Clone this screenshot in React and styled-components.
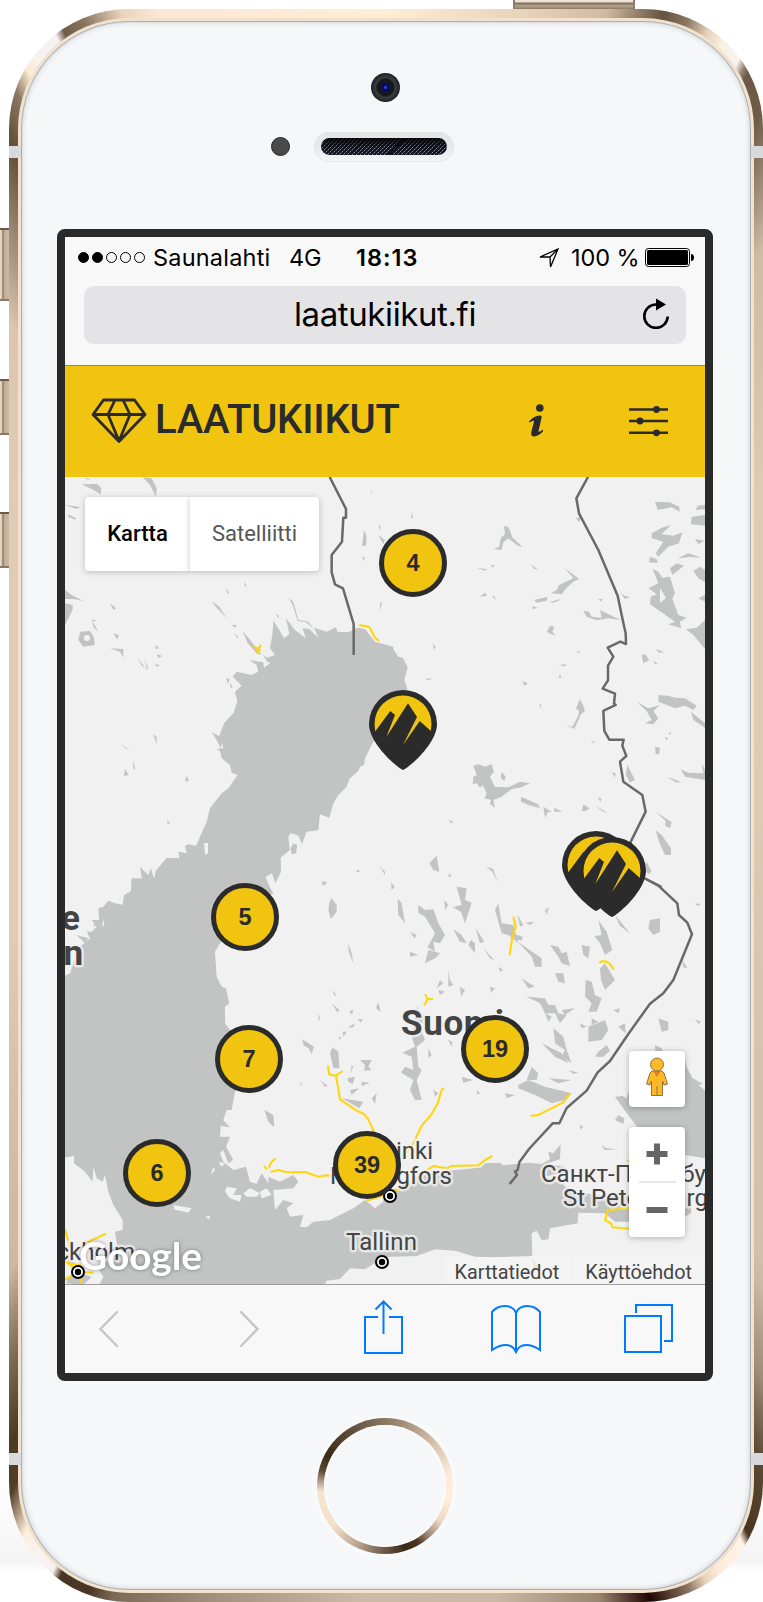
import React from "react";
import styled, { createGlobalStyle } from "styled-components";

const Global = createGlobalStyle`
  * { box-sizing: border-box; }
  html, body { margin: 0; padding: 0; background: #fff; }
  body { width: 763px; height: 1602px; overflow: hidden; }
`;

const ink = "#2b2b2b";
const yellow = "#f1c40f";
const blue = "#007aff";
const ui = `Inter, "Liberation Sans", sans-serif`;
const roboto = `Roboto, "Liberation Sans", sans-serif`;

/* ---------- device ---------- */
const Stage = styled.main`
  display: grid;
  grid-template: 9px 1593px / 9px 754px;
  width: 763px;
  height: 1602px;
  background: linear-gradient(#fff 1470px, #f5f5f5 1562px, #fff 1572px);
`;
const PowerRail = styled.div`
  grid-column: 1 / 3;
  padding-left: 513px;
`;
const PowerButton = styled.div`
  width: 122px;
  height: 9px;
  border: 1px solid #8d7c69;
  border-bottom: 0;
  border-width: 0 2px;
  background: linear-gradient(#eee5da 0 2px, #7a6855 3px, #b7a58f 6px, #8b7966 9px);
`;
const SideRail = styled.div`
  display: flex;
  flex-direction: column;
  padding-top: 219px;
`;
const SideButton = styled.div`
  height: ${(p) => p.$h}px;
  margin-bottom: ${(p) => p.$gap}px;
  border-top: 2px solid #6d5a46;
  border-bottom: 2px solid #8b7762;
  background: linear-gradient(90deg, #eadbc8 0 1px, #cdb9a3 2px, #7c6955 3px, #bfac97 4px, #cbb9a5 9px);
`;
const Shell = styled.div`
  position: relative;
  height: 1593px;
  padding: 9px;
  border-radius: 120px;
  background: conic-gradient(
    #ffedd4 0deg, #e8d2ba 10deg, #d0bba2 15.5deg, #65523e 19.3deg, #8a7762 21deg, #e6d2bd 22.6deg,
    #faf0e0 23.8deg, #f8f2f2 25.3deg, #8e8070 25.9deg, #6b5a45 26.3deg, #705c46 28.4deg, #8a7762 30deg,
    #d0bba5 34deg, #e0cbb5 50deg, #dfcab4 90deg, #d3bfaa 140deg, #cdb8a4 142deg, #9e8c78 146.7deg,
    #5d4a35 150.1deg, #4a3520 153.6deg, #fff3e5 154.2deg, #fdecdb 156.5deg, #e9d2bc 157.6deg,
    #8b7562 158.9deg, #1f0500 161.6deg, #9b8672 165deg, #cbb7a3 172deg, #cdb9a5 182deg, #a08c78 193deg,
    #7c6a57 199deg, #4a3624 200.7deg, #4a3624 202.9deg, #f6f1ef 203.5deg, #f8f4f2 205deg, #fdeedc 206.4deg,
    #b39c86 207.4deg, #523f2a 208.6deg, #4a3a25 210.5deg, #7d6b57 214deg, #cdb8a4 219deg,
    #e0cbb5 250deg, #e0ccb5 310deg, #dcc6af 322deg,
    #9a8771 327deg, #604e39 330.5deg, #8a7762 332.6deg, #fbead2 334deg, #f8f2f2 335deg,
    #f6f0f0 336.8deg, #6f5d49 337.4deg, #8a7762 339deg, #e8d2bd 341.5deg, #fde8d6 344deg, #ffedd4 360deg
  );
`;
const Antenna = styled.i`
  position: absolute;
  ${(p) => p.$side}: 0;
  top: ${(p) => p.$y}px;
  width: 12px;
  height: 12px;
  background: #d8d9dd;
`;
const Bevel = styled.div`
  height: 1575px;
  padding: 3px;
  border-radius: 111px;
  background: #f2e2cc;
`;
const Face = styled.div`
  display: flex;
  flex-direction: column;
  height: 1569px;
  padding-left: 36px;
  border-radius: 108px;
  background: #f5f7f9;
  box-shadow: inset 0 0 1px 1px #a9abad, inset 0 0 4px 3px #dfe2e5;
`;
const Sensors = styled.div`
  height: 208px;
  padding: 52px 0 0 0;
`;
const Camera = styled.div`
  width: 29px;
  height: 29px;
  margin-left: 314px;
  border-radius: 50%;
  background: radial-gradient(circle, #3443c8 0 1px, #080a72 2px 4px, #15191c 5px 8px, #3a3e3f 10px, #202323 14px);
`;
const SpeakerRow = styled.div`
  display: flex;
  align-items: center;
  gap: 24px;
  margin: 30px 0 0 214px;
`;
const Proximity = styled.div`
  width: 19px;
  height: 19px;
  margin-bottom: 1px;
  border-radius: 50%;
  border: 1px solid #222;
  background: #4a4a4a;
`;
const Speaker = styled.div`
  width: 140px;
  height: 30px;
  padding: 6px 7px;
  border-radius: 15px;
  background: linear-gradient(#e3e5e7, #e8eaec 55%, #f5f5f8);
  box-shadow: inset 0 0 0 1px #e4e6e8;
`;
const Mesh = styled.div`
  height: 17px;
  border-radius: 9px;
  background: linear-gradient(rgba(0,0,0,.85), transparent 60%),
    repeating-linear-gradient(90deg, rgba(20,18,32,.55) 0 1px, transparent 1px 2px),
    repeating-linear-gradient(135deg, #11111a 0 1.4px, #8c8a9c 1.4px 2.1px, #1b1927 2.1px 2.9px);
`;
const Home = styled.div`
  width: 136px;
  height: 136px;
  margin: 37px 0 0 260px;
  padding: 7px;
  border-radius: 50%;
  background: conic-gradient(#8a7762, #b09c86 25deg, #d8c4ae 50deg, #fdebda 80deg, #ffeedd 100deg, #eed9c4 122deg,
    #a08c78 138deg, #4a3622 150deg, #3c2a18 162deg, #6a5845 180deg, #b8a48f 205deg, #f3e0cc 232deg,
    #f7e4d0 265deg, #c4b09b 272deg, #5a4734 284deg, #3c2a18 298deg, #5d4b38 325deg, #8a7762);
  box-shadow: 0 0 5px 2px #fbfcfd;
`;
const HomeInner = styled.div`
  height: 122px;
  border-radius: 50%;
  background: #f5f7f9;
  box-shadow: inset 0 0 3px 1px #fff;
`;

/* ---------- browser ---------- */
const Screen = styled.div`
  width: 656px;
  height: 1152px;
  border: 8px solid #2a2a2a;
  border-radius: 8px;
  background: #f8f8f8;
`;
const Chrome = styled.header`
  height: 129px;
  border-bottom: 1px solid #a88a14;
`;
const Status = styled.div`
  display: flex;
  align-items: center;
  height: 49px;
  padding: 0 11px 8px 13px;
  font: 400 23.5px/30px ${ui};
  color: #000;
  white-space: nowrap;
`;
const Signal = styled.div`
  display: flex;
  gap: 3px;
  width: 68px;
  margin-right: 7px;
`;
const Dot = styled.i`
  width: 11px;
  height: 11px;
  border-radius: 50%;
  border: 1px solid #000;
  background: ${(p) => (p.$on ? "#000" : "none")};
`;
const Carrier = styled.span`
  width: 136px;
  letter-spacing: 0.2px;
`;
const Network = styled.span`
  width: 67px;
  letter-spacing: -0.3px;
`;
const Clock = styled.b`
  width: 183px;
  font-weight: 600;
  letter-spacing: 1px;
`;
const Percent = styled.span`
  flex: 1;
  padding-left: 12px;
  letter-spacing: -0.1px;
`;
const Address = styled.div`
  display: flex;
  align-items: center;
  justify-content: space-between;
  width: 602px;
  height: 58px;
  margin-left: 19px;
  padding: 0 17px 4px 42px;
  border-radius: 10px;
  background: #e4e4e6;
  font: 400 33px/40px ${ui};
  letter-spacing: -0.4px;
`;
const Host = styled.span`
  flex: 1;
  padding: 1px 0 0 1px;
  text-align: center;
`;

/* ---------- site ---------- */
const AppBar = styled.nav`
  display: flex;
  align-items: center;
  height: 111px;
  padding: 0 37px 2px 26px;
  background: ${yellow};
  color: ${ink};
`;
const Title = styled.h1`
  flex: 1;
  margin: 0 0 1px 8px;
  font: 500 40px/46px ${roboto};
  letter-spacing: -0.2px;
`;
const MapArea = styled.section`
  position: relative;
  height: 808px;
  overflow: hidden;
  border-bottom: 1px solid #a0a0a0;
  background: #f1f1f1;
`;
const MapSvg = styled.svg`
  display: block;
`;
const MapType = styled.div`
  position: absolute;
  left: 20px;
  top: 20px;
  display: flex;
`;
const TypeButton = styled.button`
  width: ${(p) => p.$w}px;
  height: 74px;
  padding: 0 0 1px;
  border: 0;
  border-radius: ${(p) => (p.$on ? "4px 0 0 4px" : "0 4px 4px 0")};
  background: #fff;
  box-shadow: 0 1px 6px rgba(0,0,0,.22);
  font: ${(p) => (p.$on ? 500 : 400)} 22px ${roboto};
  color: ${(p) => (p.$on ? "#000" : "#565656")};
`;
const Cluster = styled.div`
  position: absolute;
  left: ${(p) => p.$x - 99}px;
  top: ${(p) => p.$y - 511}px;
  width: 68px;
  height: 68px;
  padding-top: 1px;
  border: 5.5px solid ${ink};
  border-radius: 50%;
  background: ${yellow};
  color: ${ink};
  font: 700 23.5px/57px "Liberation Sans", Arial, sans-serif;
  text-align: center;
`;
const PinBox = styled.svg`
  position: absolute;
  left: ${(p) => p.$x - 99}px;
  top: ${(p) => p.$y - 477}px;
`;
const Controls = styled.div`
  position: absolute;
  right: 20px;
  top: 574px;
  display: grid;
  gap: 20px;
`;
const Panel = styled.div`
  display: flex;
  flex-direction: column;
  align-items: center;
  width: 56px;
  height: ${(p) => p.$h}px;
  border-radius: 4px;
  background: #fff;
  box-shadow: 0 1px 6px rgba(0,0,0,.28);
`;
const PegmanIcon = styled.svg`
  margin-top: 6px;
`;
const SlidersIcon = styled.svg`
  margin-left: 85px;
`;
const Zoom = styled.div`
  display: grid;
  place-items: center;
  height: 54px;
`;
const Rule = styled.i`
  width: 37px;
  height: 2px;
  background: #e6e6e6;
`;
const Credits = styled.div`
  position: absolute;
  right: 0;
  bottom: 0;
  display: flex;
  gap: 2px;
  height: 27px;
  font: 400 19.8px/31px ${roboto};
  color: #444;
`;
const Credit = styled.span`
  padding: 0 ${(p) => p.$r}px 0 11px;
  background: rgba(245,245,245,.72);
`;
const Toolbar = styled.footer`
  display: grid;
  grid-template-columns: 87px 194px 74px 192px 73px;
  justify-items: center;
  align-items: center;
  height: 88px;
`;
const ToolIcon = styled.svg`
  display: block;
  margin-bottom: ${(p) => p.$lift || 0}px;
  fill: none;
  stroke: ${(p) => (p.$muted ? "#c5c5c7" : blue)};
  stroke-width: ${(p) => (p.$muted ? 2.4 : 2)};
  stroke-linecap: ${(p) => (p.$muted ? "round" : "butt")};
`;

/* ---------- map drawing ---------- */
const sea = "#c2c4c3";
const poly = (list) => list.split("|").map((p) => "M" + p.trim() + "Z").join("");

const NW = poly(`640 437 655 460 672 490 688 478 678 430 705 465 737 490 728 460 748 462 775 488 762 458 800 470 828 457 832 470 865 472 893 458 915 462 945 500 1000 515 1000 760 940 800 915 850 912 870 900 875 895 888 868 912 860 935 835 960 820 985 808 1028 780 1018 775 1066 740 1070 726 1107 715 1082 692 1074 685 1085 690 1125 662 1148 663 1190 646 1224 636 1195 617 1205 630 1240 215 1240 215 1213 247 1217 240 1175 265 1200 272 1180 283 1212 287 1188 320 1148 358 1150 355 1130 380 1135 375 1113 385 1108 408 1113 420 1085 440 1040 450 1000 485 955 505 940 533 900 515 893 510 870 485 850 480 828 470 822 490 820 485 797 475 790 492 745 520 715 532 680 525 650 545 632 518 605 530 590 575 600 595 590 590 570 568 555 610 562 612 578 630 565 622 548 645 540 630 520 637 480
|65 28 112 27 124 40 122 58 95 42|15 90 60 96 50 102|25 118 48 130 46 134 25 126|248 6 275 10 290 40 288 65 270 30|80 8 95 16 78 12|15 345 35 360 70 378 40 372 15 372|15 385 38 390 38 405 15 450|60 470 90 468 102 488 104 510 70 515 55 495|96 433 110 437 98 440 116 472 100 455|150 385 168 400 160 404|200 418 220 432|160 475 176 480 172 494|150 520 190 522 190 548 180 530|147 557 172 560|231 548 262 585 252 550 266 582 245 572|288 510 298 520 286 522|290 538 308 543 295 548|286 567 300 571 290 576|498 342 507 352 502 358|555 320 560 335 553 332|455 378 478 395 500 430 470 398|515 450 530 450 525 458|548 468 575 500 605 540 590 535 563 505|610 540 635 558 622 562|685 368 700 380 715 434 745 440 760 460 738 442 713 437 698 390|648 418 656 420 655 430|525 475 538 492 528 485|498 610 508 612 505 628|510 625 518 635 512 640|455 772 490 790 482 820 470 795|183 806 208 826 195 820|218 855 226 880 221 885|195 882 206 900 192 903|380 902 387 918 375 918|225 918 258 944|322 1035 330 1045 322 1047|203 738 220 742|228 748 242 758|280 778 290 785 290 808|152 745 160 755|700 1105 712 1110 708 1135 695 1138 692 1120|895 1183 900 1192 888 1190|787 1220 800 1220 797 1230|905 242 915 250 912 258|912 165 920 185 918 212 906 213|935 45 937 52 932 52|955 150 962 155 960 168|955 180 975 195 970 208|960 385 966 382 960 410|958 1172 975 1190 975 1200`);

const NE = poly(`-30 505 0 509 22 518 40 545 53 548 68 577 58 615 68 645 60 700 -30 780
|357 153 370 155 383 188 412 215 398 212 370 190 355 202 350 225 325 222 343 215 347 190 360 178|275 278 307 283 300 287|318 270 330 271 322 278|436 268 460 284 448 282|538 278 582 312 565 320 545 338 530 358 498 355 515 345 522 330 565 310|285 365 300 353 306 362|320 362 330 365 332 375|447 375 470 370 488 365 485 377 455 383|497 380 525 372 520 378 500 384|443 393 458 398 442 403|486 470 495 452 508 456 502 470 512 482 492 475|595 408 612 410 620 425 650 428 645 405 708 436 670 430 635 436 605 425|640 372 653 372 648 380|705 352 718 362 735 366 720 372|143 505 152 515 147 525|177 558 203 557|120 612 144 610 130 616|190 619 215 616|412 618 428 625 418 632|463 687 470 690 466 700|520 570 545 568 540 574|525 597 530 608 520 608|585 672 593 688 600 708 588 718 568 762 543 750 562 755 580 722 582 708 573 700|265 872 280 868 300 875 320 868 327 890 315 905 330 935 370 937 405 920 435 925 405 938 380 942 350 965 325 975 330 998 315 988 318 975 298 970 305 955 293 930 285 938 275 925 263 928 265 905 275 900|350 890 362 905 358 918 347 908|408 965 460 988 465 1000 430 990 408 980|475 995 500 1010 488 1012 480 1028|508 998 533 1010 508 1010|595 988 614 1000 603 1008 590 1008|632 992 668 1015 650 1008|145 935 160 955|190 1032 204 1040 200 1046|155 1142 163 1190 145 1185 133 1165|303 1174 325 1183 338 1222 322 1190|192 1195 200 1205 190 1205|727 870 750 915 735 922 722 900|680 890 692 895 690 908|810 80 855 82 882 95 885 110 860 97 818 105|938 92 960 90 960 103 932 105|920 125 960 120 960 152 918 148|800 175 830 158 858 150 830 178 865 182 892 172 882 205 850 215 820 245 812 235 825 215 835 200 800 190|795 245 815 252 818 264 792 262|878 250 910 235 950 248 915 246|930 192 958 197 940 207|862 300 855 280 875 265 897 272|803 282 820 290 832 308 855 305 870 355 862 370 880 420 905 428 885 440 888 460 850 448 870 440 795 388 797 365 815 358 790 340 820 325|925 288 945 275 960 285 960 322 940 310|903 463 935 458 960 435 960 522 925 480|940 370 960 360 960 380|770 540 780 538 793 555 775 565|812 522 838 532 822 533|805 557 820 567 810 568|820 660 850 662 870 668 900 670 935 692 925 705 900 692 870 700 820 680|755 680 790 700 825 690 805 708 820 730 805 748 780 745 800 735 785 708|918 710 960 745 960 758 925 735|810 815 825 818 822 838 812 838|840 785 850 790 843 796|853 772 860 774 850 780|887 883 910 893 955 895 950 865 960 885 960 915 900 905|845 905 887 920 875 923|800 892 828 910|812 1010 860 1042 855 1060 840 1052 842 1038|812 1065 830 1080 858 1120 858 1140 840 1140 822 1100|785 1160 800 1190 790 1198 778 1180|865 1183 872 1200|573 130 590 125 582 142|80 112 84 130 78 128|42 50 68 68|373 48 363 78|575 528 586 528 580 535|410 1160 425 1176|618 800 632 798 622 805|638 965 650 972 646 980`);

const SW = poly(`215 -5 213 33 192 45 188 74 165 70 145 62 130 80 115 85 118 120 95 120 110 140 95 155 80 155 90 175 60 200 45 235 30 280 15 287 0 290 0 835 42 828 42 850 75 875 98 905 100 860 110 895 128 905 135 885 145 935 160 975 188 1020 188 1050 165 1055 172 1100 130 1110 150 1140 110 1160 130 1190 115 1220 790 1220 800 1202 840 1197 870 1165 915 1168 960 1140 990 1130 990 950 945 985 915 960 880 985 840 1005 810 1020 760 1025 740 1042 720 1040 730 1005 690 1010 680 985 700 970 670 960 645 990 640 930 700 925 715 905 700 885 660 905 625 890 625 910 605 880 590 910 570 905 558 860 520 870 490 845 480 820 490 810 505 850 520 840 498 800 510 770 480 770 482 738 510 742 490 720 500 690 515 690 525 635 560 550 510 450 495 430 495 380 508 370 498 325 485 320 470 290 465 215 480 190 530 100 640 40 615 -5`);
const SWland = poly(`500 920 530 925 520 945 545 945 540 965 510 955 495 935|550 940 570 925 600 940 590 950 560 950|600 935 620 925 635 945 605 955|325 985 345 990 340 975 395 985 385 998 360 992|435 1010 450 1008 448 1018|460 860 465 870 452 885|130 115 133 135 127 140|565 860 585 880 592 912 570 905|630 1012 645 1018|475 845 495 850 485 860`);
const SWlake = poly(`815 55 830 75 830 95 812 117 805 90 808 68|785 5 800 8 788 18|840 125 848 132|865 190 875 220 880 250 866 215|785 185 790 190|818 330 830 348 822 345|815 370 838 390 832 397|853 385 862 390|868 395 880 388 876 405|955 367 962 395 948 385|893 418 908 418 902 428|862 443 885 430 880 442|848 455 860 455 850 470|836 470 845 472 838 480|775 400 780 415 776 425|727 478 762 500 755 522 745 505 730 495|818 502 835 515 838 565 820 565 810 520|900 540 935 540 925 560 935 570 912 572 915 555|862 595 885 590 878 612 865 605|905 605 930 608 905 618|870 630 898 625 875 645|875 555 880 560 872 580|780 600 803 618 795 620|845 655 910 665 898 685|935 655 950 640 945 672|613 690 640 705 643 742 625 725|615 625 635 640|720 612 725 606 724 618|20 1195 60 1180 95 1190 70 1215 20 1210|15 1120 45 1150 30 1160|105 120 120 125 100 142|85 175 50 165 75 190|50 70 58 78`);

const SE = poly(`-5 932 40 925 90 890 150 875 240 868 290 862 300 850 345 848 355 856 430 848 470 852 495 838 490 815 505 820 527 793 525 838 490 850 540 862 560 875 475 890 530 910 560 935 640 945 735 950 920 955 918 1000 890 1015 800 1005 735 1025 690 1025 660 1000 580 998 578 1030 495 1045 490 1078 470 1080 455 1052 440 1060 442 1128 330 1132 270 1130 210 1112 150 1108 95 1128 20 1130 -5 1130
|690 650 712 648 725 655 730 635 800 600 895 515 905 560 925 600 955 628 960 630 960 835 900 825 760 745 722 695|915 590 955 612 940 615|810 495 830 505 835 520 812 520
|38 55 50 70 60 130 40 105|18 8 30 20 20 30|100 75 120 90 145 88 160 130 180 165 165 190 145 185 150 215 128 202 150 160 120 110 100 98|215 20 245 25 240 60 260 68 240 130 228 95 203 82 230 75|205 148 230 165 245 190 225 185|272 145 298 185 285 190|258 180 270 190 270 220 250 195|330 5 340 70 350 130 385 135 400 190 370 165 350 160 330 90 340 70|295 205 328 240 315 235|398 105 415 135 405 140|420 128 448 125 435 135|448 10 458 30|480 90 492 82 485 105|380 160 413 170 410 182 385 175|398 185 470 235 470 260 450 260 440 230|495 195 520 200 530 220 545 215 555 258 530 250 520 230|590 195 615 200 610 235 595 225|600 188 610 200|640 120 665 155 682 210 660 225 645 190 628 168 650 165|690 105 735 160 705 138|795 120 825 115 825 155 805 165 790 145|645 265 660 250 690 300 660 330 648 300|602 300 620 305 630 345 650 355 635 395 610 395 620 370 600 350|510 280 535 280 540 310 520 305|410 295 450 320 430 325|425 350 480 355 490 375 510 375 520 400 545 405 525 430 510 400 480 400 465 370|530 390 570 385 540 405|610 440 660 420 670 450 650 480 610 485|620 415 640 425 620 435|505 445 535 470 545 510 560 550 530 530 540 510 510 490|470 490 530 520 550 550 510 530|640 515 665 495 675 512 655 530 630 530|685 390 705 385 700 400|700 440 720 430 722 460|820 415 850 425 850 450 830 455|830 400 840 410|892 240 908 265 895 262|850 220 865 232|930 70 948 72 938 78|930 418 948 425 940 432|95 380 120 410 140 365 125 400 105 440 120 480 95 500 100 560 110 570 95 600 110 660 90 660 75 630 85 600 48 578 60 560 85 570 80 530 52 518 90 500 80 470|130 505 140 525 130 535|190 480 202 485 200 500|160 540 170 550|230 590 265 600 235 608|360 640 390 645 365 655|275 630 285 640 278 645|190 270 195 300 205 315 190 320|165 300 175 310 155 325|160 330 180 335 165 345|225 320 240 330 228 350|315 320 330 325 318 338|340 260 355 270 345 275|375 320 378 345|240 345 250 355|400 615 430 600 480 620 520 630 560 640 540 660 500 670 450 645 400 625|440 560 460 580 455 600 425 600|490 595 560 600 520 610|690 720 700 705 718 715 715 732|585 735 595 740 585 750|648 795 665 805 700 808 660 810|592 770 625 795|130 210 165 220 150 235 120 250|75 215 100 225 75 230|75 155 95 165 88 175|178 60 190 75 180 90|165 35 175 50|440 270 455 280|585 430 605 440 590 445|560 450 570 470|480 400 500 410 490 425|550 570 580 578 565 582|145 630 160 640 150 650|0 570 10 575|218 710 232 712|415 1213 445 1160 440 1135 465 1160 440 1180`);

const Roads = {
  a: "M898 450L928 456L945 488L957 498M582 515L600 525L590 535M604 510L595 520",
  c: "M804 557L807 582L825 588M848 573L828 586L840 658L890 692L912 702L925 718L942 755M612 857L620 868M627 865Q630 845 648 836M632 876L655 870L680 877L735 876L775 890L800 886L820 889M920 962L975 945M15 1048L30 1100M80 1088L138 1061M15 1140L54 1176L66 1213M20 1150L60 1155L54 1176L15 1198M54 1176L100 1178",
  d: "M385 110L392 140L382 170L374 226M643 249Q655 236 675 252L686 268M120 343L128 357L118 376M124 357L144 357M178 625L170 630L158 670L138 705L110 737L82 797L50 830M0 938L60 925L120 875L145 858L185 865L200 858L280 856L300 840L322 828M437 708L462 704L535 667L555 642M735 985L668 990L660 1020L678 1030L682 1042L735 1046M728 840L740 850",
};
const Borders = {
  a: "M809 6L858 102L858 128L850 128L846 200L815 240L815 292L825 328L849 340L881 447L881 540",
  b: "M609 6L574 70L582 115L640 225L698 362L712 430L722 475L723 507L706 500L668 518L685 545L669 572L669 616L653 641L690 656L687 685L692 690L655 708L658 768L673 794L716 794L712 812L724 843L705 860L715 920L772 960L782 1010L730 1115L720 1180L783 1212L830 1236",
  d: "M783 -3L820 17L877 70L882 105L907 128L921 163L865 300L835 340L795 371L730 462L675 543L638 577L605 632L545 684L523 730L503 730L432 807L403 847L398 870L390 875L396 885L374 912",
};

const tile = (x, y) => `translate(${x} ${y}) scale(.33333)`;
const Tile = ({ x, y, water, land, lakes, roads, border }) => (
  <g transform={tile(x, y)}>
    <path d={water} fill={sea} />
    {land && <path d={land} fill="#f1f1f1" />}
    {lakes && <path d={lakes} fill={sea} />}
    <path d={roads} fill="none" stroke="#ffd60a" strokeWidth="6.2" strokeLinejoin="round" />
    <path d={border} fill="none" stroke="#696969" strokeWidth="7.5" strokeLinejoin="round" />
  </g>
);
const Label = styled.text`
  font: ${(p) => (p.$big ? "700 35px" : "400 24px")} ${roboto};
  fill: #444;
  stroke: rgba(241,241,241,.75);
  stroke-width: 5px;
  stroke-linejoin: round;
  paint-order: stroke;
`;
const Logo = styled.text`
  font: 700 38px Lato, sans-serif;
  fill: #fff;
  filter: drop-shadow(0 0 2px rgba(0,0,0,.4));
`;
const City = ({ x, y }) => (
  <g>
    <circle cx={x} cy={y} r="7" fill="#000" />
    <circle cx={x} cy={y} r="5" fill="#fff" />
    <circle cx={x} cy={y} r="3.2" fill="#000" />
  </g>
);
const BaseMap = () => (
  <MapSvg width="640" height="807" viewBox="65 477 640 807">
    <Tile x={60} y={475} water={NW} roads={Roads.a} border={Borders.a} />
    <Tile x={385} y={475} water={NE} border={Borders.b} />
    <Tile x={60} y={880} water={SW} land={SWland} lakes={SWlake} roads={Roads.c} />
    <Tile x={385} y={880} water={SE} roads={Roads.d} border={Borders.d} />
    <circle cx="87" cy="638" r="3" fill="#f1f1f1" />
    <path d="M204 843h4v10l-3 2zM660 588l6 10-6 5z" fill="#f1f1f1" />
    <Label $big x="80" y="930" textAnchor="end">e</Label>
    <Label $big x="83" y="965" textAnchor="end">n</Label>
    <Label $big x="401" y="1035" textLength="103">Suomi</Label>
    <Label x="433" y="1159" textAnchor="end">Helsinki</Label>
    <Label x="330" y="1184" textLength="122">Helsingfors</Label>
    <Label x="541" y="1182">Санкт-Петербург</Label>
    <Label x="563" y="1205.5">St Petersburg</Label>
    <Label x="346" y="1249.500" textLength="71">Tallinn</Label>
    <Label x="135" y="1259.500" textAnchor="end">Stockholm</Label>
    <City x={78} y={1272} />
    <City x={390} y={1196} />
    <City x={382} y={1262} />
    <Logo x="79" y="1270" textLength="123" lengthAdjust="spacingAndGlyphs">Google</Logo>
  </MapSvg>
);

const Pin = ({ x, y }) => (
  <PinBox $x={x} $y={y} width="68" height="80" viewBox="0 0 68 80">
    <path d="M34 80C27 77 0 53 0 34a34 34 0 0 1 68 0C68 53 41 77 34 80Z" fill={ink} />
    <circle cx="34" cy="34" r="28.5" fill={yellow} />
    <path d="M5 43L21.3 21 26 25 17.3 47 39 13.3 48 27 34 55 50.7 31 63 42 55 58 34 78 13 58Z" fill={ink} />
  </PinBox>
);

const clusters = [[413, 563, 4], [245, 917, 5], [249, 1059, 7], [157, 1173, 6], [367, 1165, 39], [495, 1049, 19]];

export default function App() {
  return (
    <>
      <Global />
      <Stage>
        <PowerRail><PowerButton /></PowerRail>
        <SideRail>
          <SideButton $h={73} $gap={78} />
          <SideButton $h={56} $gap={77} />
          <SideButton $h={56} $gap={0} />
        </SideRail>
        <Shell>
          <Bevel>
            <Face>
              <Sensors>
                <Camera />
                <SpeakerRow>
                  <Proximity />
                  <Speaker><Mesh /></Speaker>
                </SpeakerRow>
              </Sensors>
              <Screen>
                <Chrome>
                  <Status>
                    <Signal>{[1, 1, 0, 0, 0].map((on, i) => <Dot key={i} $on={on} />)}</Signal>
                    <Carrier>Saunalahti</Carrier>
                    <Network>4G</Network>
                    <Clock>18:13</Clock>
                    <svg width="20" height="20" viewBox="0 0 20 20">
                      <path d="M1 9L19 1 11.5 19 11 9Z M11 9L19 1" fill="none" stroke="#000" strokeWidth="1.3" />
                    </svg>
                    <Percent>100 %</Percent>
                    <svg width="49" height="19" viewBox="0 0 49 19">
                      <rect x=".5" y=".5" width="44" height="18" rx="3" fill="none" stroke="#000" />
                      <rect x="2" y="2" width="41" height="15" rx="1.5" />
                      <path d="M46 6q3 0 3 3.500t-3 3.500z" />
                    </svg>
                  </Status>
                  <Address>
                    <Host>laatukiikut.fi</Host>
                    <svg width="26" height="31" viewBox="0 0 26 31">
                      <path d="M24.700 18.500A11.700 11.700 0 1 1 13 6.500" fill="none" stroke="#000" strokeWidth="2.600" />
                      <path d="M13 0.500L23 6.500 13 12.500Z" />
                    </svg>
                  </Address>
                </Chrome>
                <AppBar>
                  <svg width="56" height="45" viewBox="0 0 56 45" fill="none" stroke={ink} strokeWidth="2.800" strokeLinejoin="round">
                    <path d="M2 16.500L12.500 2h31L54 16.500 28 43.500ZM2 16.500H54M24 2L17 16.500 28 43 39 16.500 32 2" />
                  </svg>
                  <Title>LAATUKIIKUT</Title>
                  <svg width="15" height="33" viewBox="0 0 15 33" fill={ink}>
                    <circle cx="10.800" cy="4" r="3.800" />
                    <path d="M0 17.500Q5 11.500 11 11.500Q13 11.500 12.500 14L9.500 27Q9.500 29 14 25.500V27.500Q9 32.500 4.500 32.500Q1.500 32 2.300 28L5 17.500Q5 15.500 .5 18.500Z" />
                  </svg>
                  <SlidersIcon width="39" height="32" viewBox="0 0 39 32" fill={ink} stroke={ink} strokeWidth="2.400">
                    <path d="M0 4.500H39M0 16H39M0 27.800H39" />
                    <g stroke="none"><circle cx="27.500" cy="4.500" r="3.400" /><circle cx="11" cy="16" r="3.400" /><circle cx="27.500" cy="27.800" r="3.400" /></g>
                  </SlidersIcon>
                </AppBar>
                <MapArea>
                  <BaseMap />
                  <MapType>
                    <TypeButton $on $w={105}>Kartta</TypeButton>
                    <TypeButton $w={129}>Satelliitti</TypeButton>
                  </MapType>
                  <Pin x={403} y={690} />
                  <Pin x={596} y={831} />
                  <Pin x={612} y={837} />
                  {clusters.map(([x, y, n]) => <Cluster key={n} $x={x} $y={y}>{n}</Cluster>)}
                  <Controls>
                    <Panel $h={56}>
                      <PegmanIcon width="24" height="42" viewBox="0 0 24 42" fill="#fdb927" stroke="#8f7440" strokeWidth="1">
                        <path d="M7 14H17L19 16 22.500 27 19 28 17.500 24V38.500H6.500V24L5 28 1.500 27 5 16Z" />
                        <path d="M12 29V38.500" />
                        <path d="M8 14H16L12 20Z" fill="#e2801c" stroke="none" />
                        <circle cx="12" cy="7.500" r="6.500" />
                      </PegmanIcon>
                    </Panel>
                    <Panel $h={110}>
                      <Zoom>
                        <svg width="22" height="22" viewBox="0 0 22 22"><path d="M11 .5V21.500M.5 11H21.500" stroke="#666" strokeWidth="6" /></svg>
                      </Zoom>
                      <Rule />
                      <Zoom>
                        <svg width="22" height="6" viewBox="0 0 22 6"><path d="M.5 3H21.500" stroke="#666" strokeWidth="6" /></svg>
                      </Zoom>
                    </Panel>
                  </Controls>
                  <Credits>
                    <Credit $r={13}>Karttatiedot</Credit>
                    <Credit $r={13}>Käyttöehdot</Credit>
                  </Credits>
                </MapArea>
                <Toolbar>
                  <ToolIcon $muted width="20" height="38" viewBox="0 0 20 38"><path d="M18 2L1.500 19 18 36" /></ToolIcon>
                  <ToolIcon $muted width="20" height="38" viewBox="0 0 20 38"><path d="M2 2L18.500 19 2 36" /></ToolIcon>
                  <ToolIcon $lift={4} width="39" height="54" viewBox="0 0 39 54"><path d="M14 17H1V53H38V17H25M19.500 34V2M11.500 9.500L19.500 1.500 27.500 9.500" /></ToolIcon>
                  <ToolIcon width="50" height="50" viewBox="0 0 50 50"><path d="M25 9V48M25 9Q22 2 14 2T1 8V46Q8 41 15 41T25 48Q28 41 35 41T49 46V8Q44 2 36 2T25 9Z" /></ToolIcon>
                  <ToolIcon $lift={1} width="49" height="49" viewBox="0 0 49 49"><path d="M1 12H37V48H1ZM12 9V1H48V37H40" /></ToolIcon>
                </Toolbar>
              </Screen>
              <Home><HomeInner /></Home>
            </Face>
          </Bevel>
          <Antenna $side="left" $y={137} />
          <Antenna $side="right" $y={137} />
          <Antenna $side="left" $y={1444} />
          <Antenna $side="right" $y={1444} />
        </Shell>
      </Stage>
    </>
  );
}
